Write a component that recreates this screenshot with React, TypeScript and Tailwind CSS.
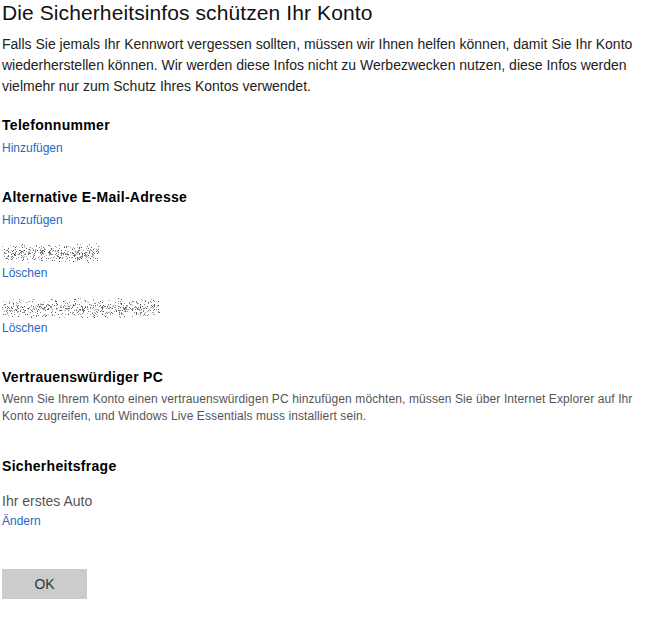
function Scrub({ width, seed }: { width: number; seed: number }) {
  // pixel noise standing in for blurred e-mail addresses
  let s = seed;
  const rnd = () => {
    s = (s * 1103515245 + 12345) % 2147483648;
    return s / 2147483648;
  };
  const dots: { x: number; y: number; c: string }[] = [];
  for (let x = 0; x < width; x++) {
    for (let y = 0; y < 20; y++) {
      const mid = Math.abs(y - 10) / 10;
      const edge = x < 4 || x > width - 6 ? 0.5 : 1;
      if (rnd() < (0.34 - mid * 0.32) * edge) {
        const g = Math.floor(70 + rnd() * 130);
        dots.push({ x, y, c: `rgb(${g},${g},${g})` });
      }
    }
  }
  return (
    <svg width={width} height={20} className="block">
      {dots.map((d, i) => (
        <rect key={i} x={d.x} y={d.y} width={1} height={1} fill={d.c} />
      ))}
    </svg>
  );
}

function Heading({ children, className = "" }: { children: string; className?: string }) {
  return (
    <h2 className={`text-[14px] leading-[16px] tracking-[0.3px] font-bold text-black ${className}`}>
      {children}
    </h2>
  );
}

function Link({ children, className = "" }: { children: string; className?: string }) {
  return (
    <a className={`block text-[12px] leading-[16px] text-[#2b67bf] ${className}`}>{children}</a>
  );
}

export default function App() {
  return (
    <div className="min-h-[626px] bg-white px-[2px] pt-px font-['Liberation_Sans',Arial,sans-serif]">
      <h1 className="text-[21px] leading-[24px] tracking-[0.1px] text-[#111]">
        Die Sicherheitsinfos schützen Ihr Konto
      </h1>
      <p className="mt-[9px] text-[14px] leading-[21px] text-[#222]">
        Falls Sie jemals Ihr Kennwort vergessen sollten, müssen wir Ihnen helfen können, damit Sie Ihr Konto
        wiederherstellen können. Wir werden diese Infos nicht zu Werbezwecken nutzen, diese Infos werden
        vielmehr nur zum Schutz Ihres Kontos verwendet.
      </p>

      <Heading className="mt-[20px]">Telefonnummer</Heading>
      <Link className="mt-[7px]">Hinzufügen</Link>

      <Heading className="mt-[33px]">Alternative E-Mail-Adresse</Heading>
      <Link className="mt-[7px]">Hinzufügen</Link>
      <div className="mt-[15px]">
        <Scrub width={97} seed={17} />
      </div>
      <Link className="mt-[2px]">Löschen</Link>
      <div className="mt-[17px]">
        <Scrub width={158} seed={91} />
      </div>
      <Link className="mt-[2px]">Löschen</Link>

      <Heading className="mt-[33px]">Vertrauenswürdiger PC</Heading>
      <p className="mt-[6px] text-[12px] leading-[17px] tracking-[0.1px] text-[#555]">
        Wenn Sie Ihrem Konto einen vertrauenswürdigen PC hinzufügen möchten, müssen Sie über Internet Explorer auf Ihr
        Konto zugreifen, und Windows Live Essentials muss installiert sein.
      </p>

      <Heading className="mt-[33px]">Sicherheitsfrage</Heading>
      <div className="mt-[18px] text-[14px] leading-[18px] text-[#555]">Ihr erstes Auto</div>
      <Link className="mt-[3px]">Ändern</Link>

      <button className="mt-[40px] block w-[85px] h-[30px] bg-[#cccccc] text-[14px] text-[#333]">
        OK
      </button>
    </div>
  );
}
